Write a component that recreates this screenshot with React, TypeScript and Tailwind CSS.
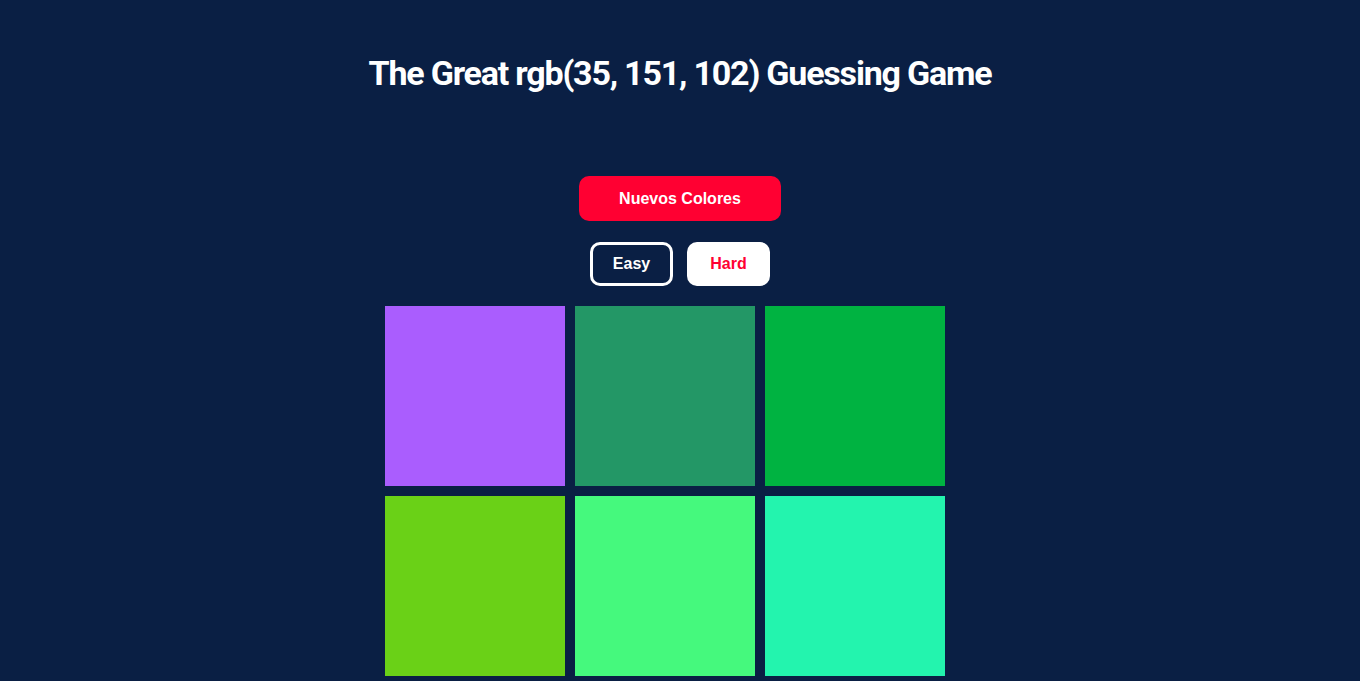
const colors = [
  "#aa5dfe",
  "#239766",
  "#00b341",
  "#6ad117",
  "#45f97d",
  "#23f4ae",
]

const App = () => {
  return (
    <div className="min-h-[681px] bg-[#0a1f44] pb-[6px] font-['Liberation_Sans',Arial,sans-serif]">
      {/* Header */}
      <h1 className="pt-[52px] text-center font-['Roboto',sans-serif] text-[34px] leading-[42px] font-bold tracking-[-1.2px] text-white">
        The Great rgb(35, 151, 102) Guessing Game
      </h1>

      {/* Controls */}
      <div className="mt-[82px] flex flex-col items-center">
        <button className="h-[45px] w-[202px] rounded-[10px] bg-[#ff0032] text-base font-bold text-white">
          Nuevos Colores
        </button>
        <div className="mt-[21px] flex gap-[14px]">
          <button className="h-[44px] w-[83px] rounded-[10px] border-[3px] border-white text-base font-bold text-white">
            Easy
          </button>
          <button className="h-[44px] w-[83px] rounded-[10px] bg-white text-base font-bold text-[#ff0032]">
            Hard
          </button>
        </div>
      </div>

      {/* Squares */}
      <div className="mx-auto mt-[20px] grid w-[600px] grid-cols-[repeat(3,180px)] gap-[10px] px-[5px]">
        {colors.map((c) => (
          <div key={c} className="h-[180px]" style={{ backgroundColor: c }} />
        ))}
      </div>
    </div>
  )
}

export default App
